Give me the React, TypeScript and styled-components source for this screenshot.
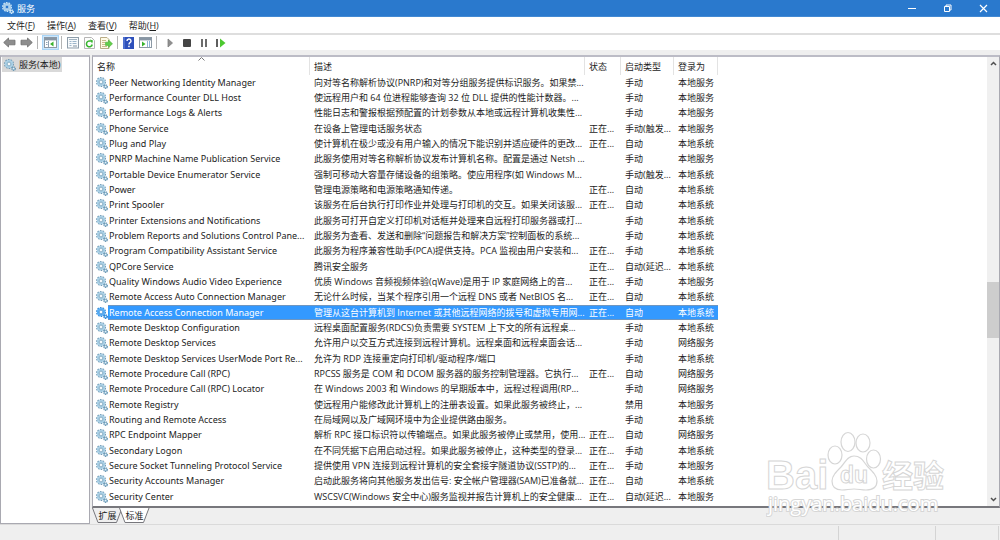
import React from "react";
import styled, { createGlobalStyle, css } from "styled-components";

const GlobalStyle = createGlobalStyle`
  * { box-sizing: border-box; }
  body {
    margin: 0;
    background: #efefef;
    color: #1c1c1c;
    font-family: "Open Sans", "Noto Sans CJK SC", sans-serif;
    font-size: 9px;
    line-height: 15px;
  }
  button {
    margin: 0;
    padding: 0;
    border: 0;
    background: none;
    color: inherit;
    font: inherit;
  }
`;

const Window = styled.div`
  position: relative;
  display: flex;
  flex-direction: column;
  height: 100vh;
  overflow: hidden;
`;

const TitleBar = styled.header`
  display: flex;
  align-items: center;
  flex: none;
  height: 17px;
  padding-left: 2px;
  gap: 3px;
  background: #2a79cd;
  border-bottom: 1px solid #4289d3;
  color: #fff;
`;

const WindowTitle = styled.h1`
  flex: 1;
  margin: 0;
  font-size: 9px;
  font-weight: 400;
`;

const CaptionButton = styled.button`
  display: grid;
  place-items: center;
  width: 33px;
  height: 16px;
`;

const MenuBar = styled.nav`
  display: flex;
  align-items: center;
  flex: none;
  gap: 12px;
  height: 18px;
  padding-left: 7px;
  background: #fff;
  border-bottom: 2px solid #dedede;
`;

const ToolBar = styled.div`
  display: flex;
  align-items: center;
  flex: none;
  height: 15px;
  padding-left: 1px;
  background: #fff;
`;

const ToolButton = styled.button<{ $active?: boolean }>`
  display: grid;
  place-items: center;
  width: 17px;
  height: 15px;
  ${(p) => p.$active && css`
    background: #cce6fb;
    border: 1px solid #a9d5f7;
  `}
`;

const ToolSeparator = styled.span<{ $wide?: boolean }>`
  width: 1px;
  height: 13px;
  margin: 0 ${(p) => (p.$wide ? 4 : 2)}px 0 2px;
  background: #b4b4b4;
`;

const Workspace = styled.main`
  display: flex;
  flex: 1;
  min-height: 0;
  gap: 2px;
  padding-top: 5px;
`;

const TreePane = styled.aside`
  flex: none;
  width: 90px;
  padding-left: 1px;
  background: #fff;
  border: 1px solid #a9a9b1;
  border-top: 2px solid #bcbcc6;
`;

const TreeItem = styled.button`
  display: flex;
  align-items: center;
  gap: 3px;
  height: 15px;
  padding: 0 2px;
  background: #d9d9d9;
`;

const ListPane = styled.section`
  display: flex;
  flex-direction: column;
  flex: 1;
  min-width: 0;
`;

const ListFrame = styled.div`
  display: flex;
  flex: 1;
  min-height: 0;
  background: #fff;
  border: 1px solid #a9a9b1;
  border-top: 2px solid #bcbcc6;
  border-bottom: 2px solid #77777c;
`;

const ListScroll = styled.div`
  flex: 1;
  min-width: 0;
  overflow: hidden;
  padding-left: 1px;
`;

const ServiceTable = styled.table`
  width: 624px;
  table-layout: fixed;
  border-collapse: separate;
  border-spacing: 0;
`;

const HeaderCell = styled.th<{ $first?: boolean; $sorted?: boolean }>`
  height: 18px;
  padding: 0 0 0 ${(p) => (p.$first ? 3 : 4)}px;
  border-right: 1px solid #e3e3e3;
  font-weight: 400;
  text-align: left;
  white-space: nowrap;
  ${(p) => p.$sorted && css`
    background: url("data:image/svg+xml,%3Csvg xmlns='http://www.w3.org/2000/svg' width='7' height='4'%3E%3Cpath d='M.5 3.5l3-3 3 3' fill='none' stroke='%23777'/%3E%3C/svg%3E") no-repeat center top;
  `}
`;

const Cell = styled.td`
  height: inherit;
  padding: 0 0 0 4px;
  overflow: hidden;
  line-height: 14px;
  white-space: nowrap;
`;

const IconCell = styled(Cell)`
  padding-left: 2px;
  line-height: 0;
`;

const NameCell = styled(Cell)`
  padding-left: 1px;
  font-family: "Noto Sans", "Noto Sans CJK SC", sans-serif;
`;

const ServiceRow = styled.tr<{ $selected?: boolean }>`
  height: 15px;
  &:nth-child(3n) { height: 16px; }
  ${(p) => p.$selected && css`
    color: #fff;
    ${Cell}:not(${IconCell}) {
      background: #3399ff;
      box-shadow: inset 0 1px #6f96c0, inset 0 -1px #6f96c0;
    }
  `}
`;

const ScrollBar = styled.div`
  display: flex;
  flex-direction: column;
  flex: none;
  width: 12px;
  background: #f0f0f0;
`;

const ScrollButton = styled.button`
  display: grid;
  place-items: center;
  height: 13px;
`;

const ScrollSpace = styled.div<{ $grow: number }>`
  flex: ${(p) => p.$grow} 1 0;
`;

const ScrollThumb = styled(ScrollSpace)`
  background: #cdcdcd;
`;

const TabStrip = styled.div`
  display: flex;
  flex: none;
  height: 16px;
`;

const Tab = styled.button<{ $active?: boolean }>`
  position: relative;
  width: 31px;
  height: 15px;
  margin-right: -4px;
  z-index: ${(p) => (p.$active ? 1 : 0)};
`;

const TabShape = styled.svg`
  position: absolute;
  inset: 0;
  z-index: -1;
`;

const StatusBar = styled.footer`
  display: flex;
  justify-content: flex-end;
  flex: none;
  height: 16px;
  padding-right: 1px;
  border-top: 1px solid #dadada;
`;

const StatusCell = styled.div<{ $width: number }>`
  width: ${(p) => p.$width}px;
  margin-top: 1px;
  border-left: 1px solid #d4d4d4;
`;

const StatusEnd = styled(StatusCell)`
  border-right: 1px solid #d4d4d4;
`;

const Watermark = styled.svg`
  position: absolute;
  right: 44px;
  bottom: 18px;
  pointer-events: none;
`;

function Gears({ light, selected }: { light?: boolean; selected?: boolean }) {
  const rim = light ? "#d3e9f8" : selected ? "#2f86d4" : "#6f9ab5";
  const face = light ? "#a9cfea" : selected ? "#59aef5" : "#a9d0e6";
  const hub = light ? "#2a79cd" : "#f4fafd";
  return (
    <svg width="12" height="12" viewBox="0 0 12 12" aria-hidden="true">
      <circle cx="5" cy="5" r="4.2" fill="none" stroke={rim} strokeWidth="1.6" strokeDasharray="1.6 1" />
      <circle cx="5" cy="5" r="3" fill={hub} stroke={face} strokeWidth="2.2" />
      <circle cx="5" cy="5" r="1.9" fill={hub} stroke={rim} strokeWidth=".8" />
      <circle cx="9.6" cy="9.6" r="1.7" fill={face} stroke={rim} strokeWidth="1.4" strokeDasharray="1.3 .5" />
      <circle cx="9.6" cy="9.6" r=".6" fill={hub} />
    </svg>
  );
}

function Arrow({ forward }: { forward?: boolean }) {
  return (
    <svg width="13" height="11" viewBox="0 0 13 11" aria-hidden="true">
      <path
        transform={forward ? "translate(13 0) scale(-1 1)" : undefined}
        d="M.7 5.5L5.500 1v2.200h6.500v4.600H5.500V10z"
        fill="#8d8d8d"
        stroke="#6f6f6f"
        strokeWidth=".8"
      />
    </svg>
  );
}

function ConsoleIcon({ run }: { run?: boolean }) {
  return (
    <svg width="13" height="11" viewBox="0 0 13 11" aria-hidden="true">
      <rect x=".5" y=".5" width="12" height="10" fill="#fff" stroke="#8c99a5" />
      <rect x="1" y="1" width="11" height="2" fill="#8896a4" />
      <path d="M1 3.5h11" stroke="#cdd5dc" />
      {run ? (
        <>
          <path d="M8.5 4v6M10.5 4v6" stroke="#8fb4d6" />
          <path d="M3 4.5l3.5 2.5L3 9.5z" fill="#37b22d" />
        </>
      ) : (
        <>
          <path d="M4.5 4v6M2 5.5h1.5M2 7.5h1.5" stroke="#8fa3b5" />
          <path d="M9.5 4.5v5L6 7z" fill="#37b22d" />
        </>
      )}
    </svg>
  );
}

function PropertiesIcon() {
  return (
    <svg width="12" height="12" viewBox="0 0 12 12" aria-hidden="true">
      <rect x=".5" y=".5" width="11" height="10.5" fill="#f7fafc" stroke="#8e9daa" />
      <path d="M2 2.5h8" stroke="#a3b4c2" />
      <path d="M2.5 4.5h2M5.5 4.5h4M2.5 6.5h2M5.5 6.5h4M2.5 8.5h2" stroke="#9cb5ca" />
      <path d="M6 9h4" stroke="#8493a1" />
    </svg>
  );
}

function RefreshIcon() {
  return (
    <svg width="11" height="12" viewBox="0 0 11 12" aria-hidden="true">
      <path d="M.5.5h7l3 3v8H.5z" fill="#fdfdfd" stroke="#b5b5b5" />
      <path d="M8.2 7.5A2.9 2.9 0 1 1 6.8 4.4" fill="none" stroke="#35b52c" strokeWidth="1.5" />
      <path d="M5.8 2.6l3.2.8-.9 3.100z" fill="#35b52c" />
    </svg>
  );
}

function ExportIcon() {
  return (
    <svg width="13" height="12" viewBox="0 0 13 12" aria-hidden="true">
      <path d="M.5.5h6.500l2 2v9H.5z" fill="#fffbe6" stroke="#b9ac86" />
      <path d="M2 3.5h4M2 5.5h3M2 7.5h3M2 9.5h5" stroke="#c9b98c" />
      <path d="M5.5 5.2h3V3l4 3.800-4 3.800V8.400h-3z" fill="#62cf4a" stroke="#49a938" strokeWidth=".6" />
    </svg>
  );
}

function HelpIcon() {
  return (
    <svg width="11" height="12" viewBox="0 0 11 12" aria-hidden="true">
      <rect width="11" height="12" fill="#2e50bb" />
      <path d="M1 0v12" stroke="#6f8fe2" />
      <path d="M4 4a2 2 0 1 1 3 1.700c-.8.5-1 .9-1 1.800" fill="none" stroke="#fff" strokeWidth="1.4" />
      <rect x="5.2" y="8.7" width="1.5" height="1.5" fill="#fff" />
    </svg>
  );
}

function Glyph({ kind }: { kind: "play" | "stop" | "pause" | "restart" }) {
  return (
    <svg width="11" height="10" viewBox="0 0 11 10" aria-hidden="true">
      {kind === "play" && <path d="M4 1l4.500 4L4 9z" fill="#8f8f8f" stroke="#7d7d7d" strokeWidth=".8" />}
      {kind === "stop" && <rect x="2" y="1" width="8" height="8" rx="1" fill="#454545" />}
      {kind === "pause" && <path d="M4 1v8M8 1v8" stroke="#6c6c6c" strokeWidth="2" />}
      {kind === "restart" && (
        <>
          <path d="M2 1v8" stroke="#5e5e5e" strokeWidth="2" />
          <path d="M5 .5L10.500 5 5 9.500z" fill="#4cc82f" />
        </>
      )}
    </svg>
  );
}

function Chevron({ down }: { down?: boolean }) {
  return (
    <svg width="7" height="5" viewBox="0 0 7 5" aria-hidden="true">
      <path d={down ? "M1 1l2.500 2.500L6 1" : "M1 4l2.500-2.500L6 4"} fill="none" stroke="#505050" strokeWidth="1.5" />
    </svg>
  );
}

type Service = [name: string, description: string, status: string, startup: string, account: string];

const RUN = "正在...";
const MANUAL = "手动";
const AUTO = "自动";
const TRIGGER = "手动(触发...";
const DELAYED = "自动(延迟...";
const LOCAL_SERVICE = "本地服务";
const LOCAL_SYSTEM = "本地系统";
const NETWORK = "网络服务";

const services: Service[] = [
  ["Peer Networking Identity Manager", "向对等名称解析协议(PNRP)和对等分组服务提供标识服务。如果禁...", "", MANUAL, LOCAL_SERVICE],
  ["Performance Counter DLL Host", "使远程用户和 64 位进程能够查询 32 位 DLL 提供的性能计数器。...", "", MANUAL, LOCAL_SERVICE],
  ["Performance Logs & Alerts", "性能日志和警报根据预配置的计划参数从本地或远程计算机收集性...", "", MANUAL, LOCAL_SERVICE],
  ["Phone Service", "在设备上管理电话服务状态", RUN, TRIGGER, LOCAL_SERVICE],
  ["Plug and Play", "使计算机在极少或没有用户输入的情况下能识别并适应硬件的更改...", RUN, AUTO, LOCAL_SYSTEM],
  ["PNRP Machine Name Publication Service", "此服务使用对等名称解析协议发布计算机名称。配置是通过 Netsh ...", "", MANUAL, LOCAL_SERVICE],
  ["Portable Device Enumerator Service", "强制可移动大容量存储设备的组策略。使应用程序(如 Windows M...", "", TRIGGER, LOCAL_SYSTEM],
  ["Power", "管理电源策略和电源策略通知传递。", RUN, AUTO, LOCAL_SYSTEM],
  ["Print Spooler", "该服务在后台执行打印作业并处理与打印机的交互。如果关闭该服...", RUN, AUTO, LOCAL_SYSTEM],
  ["Printer Extensions and Notifications", "此服务可打开自定义打印机对话框并处理来自远程打印服务器或打...", "", MANUAL, LOCAL_SYSTEM],
  ["Problem Reports and Solutions Control Pane...", "此服务为查看、发送和删除“问题报告和解决方案”控制面板的系统...", "", MANUAL, LOCAL_SYSTEM],
  ["Program Compatibility Assistant Service", "此服务为程序兼容性助手(PCA)提供支持。PCA 监视由用户安装和...", RUN, MANUAL, LOCAL_SYSTEM],
  ["QPCore Service", "腾讯安全服务", RUN, DELAYED, LOCAL_SYSTEM],
  ["Quality Windows Audio Video Experience", "优质 Windows 音频视频体验(qWave)是用于 IP 家庭网络上的音...", RUN, MANUAL, LOCAL_SERVICE],
  ["Remote Access Auto Connection Manager", "无论什么时候，当某个程序引用一个远程 DNS 或者 NetBIOS 名...", RUN, AUTO, LOCAL_SYSTEM],
  ["Remote Access Connection Manager", "管理从这台计算机到 Internet 或其他远程网络的拨号和虚拟专用网...", RUN, AUTO, LOCAL_SYSTEM],
  ["Remote Desktop Configuration", "远程桌面配置服务(RDCS)负责需要 SYSTEM 上下文的所有远程桌...", "", MANUAL, LOCAL_SYSTEM],
  ["Remote Desktop Services", "允许用户以交互方式连接到远程计算机。远程桌面和远程桌面会话...", "", MANUAL, NETWORK],
  ["Remote Desktop Services UserMode Port Re...", "允许为 RDP 连接重定向打印机/驱动程序/端口", "", MANUAL, LOCAL_SYSTEM],
  ["Remote Procedure Call (RPC)", "RPCSS 服务是 COM 和 DCOM 服务器的服务控制管理器。它执行...", RUN, AUTO, NETWORK],
  ["Remote Procedure Call (RPC) Locator", "在 Windows 2003 和 Windows 的早期版本中，远程过程调用(RP...", "", MANUAL, NETWORK],
  ["Remote Registry", "使远程用户能修改此计算机上的注册表设置。如果此服务被终止，...", "", "禁用", LOCAL_SERVICE],
  ["Routing and Remote Access", "在局域网以及广域网环境中为企业提供路由服务。", "", MANUAL, LOCAL_SYSTEM],
  ["RPC Endpoint Mapper", "解析 RPC 接口标识符以传输端点。如果此服务被停止或禁用，使用...", RUN, AUTO, NETWORK],
  ["Secondary Logon", "在不同凭据下启用启动过程。如果此服务被停止，这种类型的登录...", RUN, MANUAL, LOCAL_SYSTEM],
  ["Secure Socket Tunneling Protocol Service", "提供使用 VPN 连接到远程计算机的安全套接字隧道协议(SSTP)的...", RUN, MANUAL, LOCAL_SERVICE],
  ["Security Accounts Manager", "启动此服务将向其他服务发出信号: 安全帐户管理器(SAM)已准备就...", RUN, AUTO, LOCAL_SYSTEM],
  ["Security Center", "WSCSVC(Windows 安全中心)服务监视并报告计算机上的安全健康...", RUN, DELAYED, LOCAL_SERVICE],
  ["", "", "", "", ""],
];

const menus = [["文件", "F"], ["操作", "A"], ["查看", "V"], ["帮助", "H"]];

export default function App() {
  const [selected, setSelected] = React.useState(15);
  return (
    <Window lang="zh-CN">
      <GlobalStyle />
      <TitleBar>
        <Gears light />
        <WindowTitle>服务</WindowTitle>
        <CaptionButton aria-label="最小化">
          <svg width="9" height="9"><path d="M1 4.5h8" stroke="#fff" /></svg>
        </CaptionButton>
        <CaptionButton aria-label="还原">
          <svg width="9" height="9" fill="none" stroke="#fff"><path d="M1.500 2.500h5v5h-5zM3 2.500v-1.500h5v5H6.500" /></svg>
        </CaptionButton>
        <CaptionButton aria-label="关闭">
          <svg width="9" height="9"><path d="M1 1l7 7M8 1L1 8" stroke="#fff" strokeWidth="1.2" /></svg>
        </CaptionButton>
      </TitleBar>
      <MenuBar>
        {menus.map(([label, key]) => (
          <button key={key}>{label}(<u>{key}</u>)</button>
        ))}
      </MenuBar>
      <ToolBar role="toolbar">
        <ToolButton aria-label="后退"><Arrow /></ToolButton>
        <ToolButton aria-label="前进"><Arrow forward /></ToolButton>
        <ToolSeparator $wide />
        <ToolButton $active aria-label="显示/隐藏控制台树"><ConsoleIcon /></ToolButton>
        <ToolSeparator />
        <ToolButton aria-label="属性"><PropertiesIcon /></ToolButton>
        <ToolButton aria-label="刷新"><RefreshIcon /></ToolButton>
        <ToolButton aria-label="导出列表"><ExportIcon /></ToolButton>
        <ToolSeparator />
        <ToolButton aria-label="帮助"><HelpIcon /></ToolButton>
        <ToolButton aria-label="显示/隐藏操作窗格"><ConsoleIcon run /></ToolButton>
        <ToolSeparator $wide />
        <ToolButton aria-label="启动服务"><Glyph kind="play" /></ToolButton>
        <ToolButton aria-label="停止服务"><Glyph kind="stop" /></ToolButton>
        <ToolButton aria-label="暂停服务"><Glyph kind="pause" /></ToolButton>
        <ToolButton aria-label="重新启动服务"><Glyph kind="restart" /></ToolButton>
      </ToolBar>
      <Workspace>
        <TreePane>
          <TreeItem><Gears />服务(本地)</TreeItem>
        </TreePane>
        <ListPane>
          <ListFrame>
            <ListScroll>
              <ServiceTable>
                <colgroup>
                  <col width="14" />
                  <col width="202" />
                  <col width="275" />
                  <col width="36" />
                  <col width="53" />
                  <col width="44" />
                </colgroup>
                <thead>
                  <tr>
                    <HeaderCell colSpan={2} $first $sorted>名称</HeaderCell>
                    <HeaderCell>描述</HeaderCell>
                    <HeaderCell>状态</HeaderCell>
                    <HeaderCell>启动类型</HeaderCell>
                    <HeaderCell>登录为</HeaderCell>
                  </tr>
                </thead>
                <tbody>
                  {services.map(([name, description, status, startup, account], i) => (
                    <ServiceRow key={i} $selected={i === selected} onClick={() => setSelected(i)}>
                      <IconCell><Gears selected={i === selected} /></IconCell>
                      <NameCell>{name}</NameCell>
                      <Cell>{description}</Cell>
                      <Cell>{status}</Cell>
                      <Cell>{startup}</Cell>
                      <Cell>{account}</Cell>
                    </ServiceRow>
                  ))}
                </tbody>
              </ServiceTable>
            </ListScroll>
            <ScrollBar>
              <ScrollButton aria-label="向上滚动"><Chevron /></ScrollButton>
              <ScrollSpace $grow={212} />
              <ScrollThumb $grow={57} />
              <ScrollSpace $grow={155} />
              <ScrollButton aria-label="向下滚动"><Chevron down /></ScrollButton>
            </ScrollBar>
          </ListFrame>
          <TabStrip role="tablist">
            <Tab role="tab" aria-selected={false}>
              <TabShape width="31" height="15"><path d="M.5 0L6 14.500h18.500L30 0" fill="#efefef" stroke="#77777c" /></TabShape>
              扩展
            </Tab>
            <Tab role="tab" aria-selected $active>
              <TabShape width="31" height="15"><path d="M.5 0L6 14.500h18.500L30 0" fill="#fff" stroke="#77777c" /></TabShape>
              标准
            </Tab>
          </TabStrip>
        </ListPane>
      </Workspace>
      <StatusBar>
        <StatusCell $width={97} />
        <StatusEnd $width={64} />
      </StatusBar>
      <Watermark width="190" height="92" fill="#fff" stroke="#d6d6d6" aria-hidden="true">
        <g strokeWidth="1.2">
          <ellipse cx="69" cy="25" rx="7" ry="9" />
          <ellipse cx="82" cy="12" rx="7" ry="9.5" />
          <ellipse cx="97" cy="13" rx="7" ry="9" />
          <ellipse cx="107.5" cy="29" rx="7" ry="9" />
          <path d="M88 26c8 0 10 7 14 11 5 5 9 9 9 14 0 7-5 9-11 9-5 0-7-1-12-1s-7 1-12 1c-6 0-10-3-10-9 0-5 4-9 9-14 4-4 6-11 13-11z" />
        </g>
        <g fontFamily='"Liberation Sans", "Noto Sans CJK SC", sans-serif' fontWeight="700" strokeWidth="1">
          <text x="0" y="59" fontSize="40">Bai</text>
          <text x="74" y="53" fontSize="23">du</text>
          <text x="116" y="57" fontSize="31">经验</text>
        </g>
        <text x="2" y="81" fontSize="20" fontFamily='"Open Sans", sans-serif' fontWeight="500" strokeWidth="2" paintOrder="stroke">jingyan.baidu.com</text>
      </Watermark>
    </Window>
  );
}
